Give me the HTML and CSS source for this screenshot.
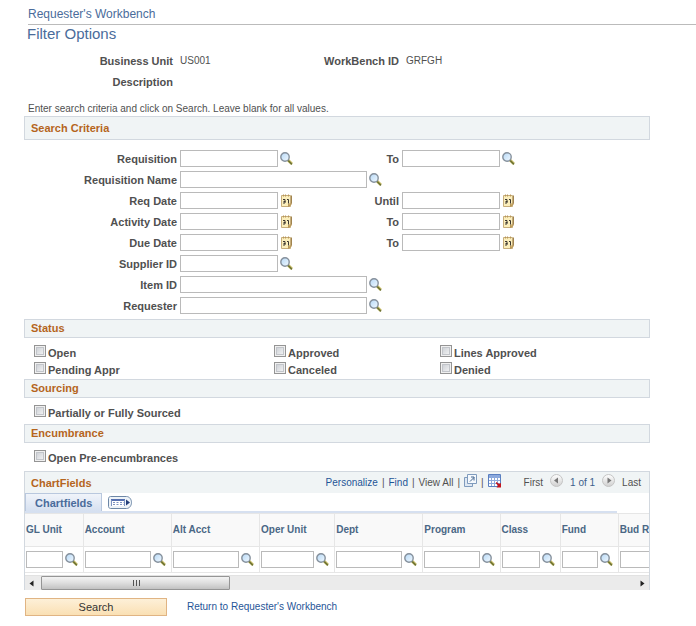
FILE: index.html
```html
<!DOCTYPE html>
<html lang="en">
<head>
    <meta charset="UTF-8">
    <meta name="viewport" content="width=device-width, initial-scale=1.0">
    <title>Requester's Workbench</title>
    <link rel="stylesheet" href="styles.css">
</head>
<body>
    <!-- Shared icons -->
    <svg class="sprite" aria-hidden="true">
        <defs>
            <linearGradient id="lens" x1="0" y1="0" x2="1" y2="1">
                <stop offset="0" stop-color="#b5d8f6"/>
                <stop offset="1" stop-color="#f2f9ff"/>
            </linearGradient>
            <linearGradient id="ball" x1="0" y1="0" x2="0" y2="1">
                <stop offset="0" stop-color="#fff"/>
                <stop offset="1" stop-color="#cfcfcf"/>
            </linearGradient>
            <symbol id="lookup" viewBox="0 0 13 13">
                <path d="M8 8l3.8 3.8" stroke="#d5c878" stroke-width="3"/>
                <path d="M8 8.4l4 4" stroke="#6f7432" stroke-width="1.6"/>
                <circle cx="5" cy="5" r="4.2" fill="url(#lens)" stroke="#85909c" stroke-width="1.4"/>
            </symbol>
            <symbol id="calendar" viewBox="0 0 13 13">
                <path d="M1.5 1.5h9v11h-9z" fill="#fbeebb" stroke="#c6ad7a"/>
                <path d="M11.5 1.5v8l-3 3" fill="none" stroke="#a08450"/>
                <path d="M8.5 12.5v-2.5h3z" fill="#e8cc7c" stroke="#b8975a"/>
                <path d="M3.5 .5v2M5.5 .5v2M8.500 .5v2" stroke="#b8975a"/>
                <path d="M3 5.500h2v3.500H3M3.500 7.500h2M7 5.500h1.500V9.500" fill="none" stroke="#3a3630"/>
            </symbol>
        </defs>
    </svg>

    <div class="breadcrumb">Requester's Workbench</div>

    <form class="page">
        <h1>Filter Options</h1>

        <dl class="info">
            <dt>Business Unit</dt><dd>US001</dd>
            <dt>WorkBench ID</dt><dd>GRFGH</dd>
            <dt>Description</dt><dd></dd>
        </dl>

        <p class="hint">Enter search criteria and click on Search. Leave blank for all values.</p>

        <h2 class="bar bar-tall">Search Criteria</h2>
        <div class="criteria">
            <div class="row">
                <label for="req">Requisition</label>
                <input type="text" id="req">
                <button type="button" class="icon" aria-label="Look up requisition"><svg><use href="#lookup"/></svg></button>
                <label class="to" for="req-to">To</label>
                <input type="text" id="req-to">
                <button type="button" class="icon" aria-label="Look up requisition to"><svg><use href="#lookup"/></svg></button>
            </div>
            <div class="row">
                <label for="req-name">Requisition Name</label>
                <input type="text" class="wide" id="req-name">
                <button type="button" class="icon" aria-label="Look up requisition name"><svg><use href="#lookup"/></svg></button>
            </div>
            <div class="row">
                <label for="req-date">Req Date</label>
                <input type="text" id="req-date">
                <button type="button" class="icon" aria-label="Choose req date"><svg><use href="#calendar"/></svg></button>
                <label class="to" for="req-until">Until</label>
                <input type="text" id="req-until">
                <button type="button" class="icon" aria-label="Choose req date until"><svg><use href="#calendar"/></svg></button>
            </div>
            <div class="row">
                <label for="act-date">Activity Date</label>
                <input type="text" id="act-date">
                <button type="button" class="icon" aria-label="Choose activity date"><svg><use href="#calendar"/></svg></button>
                <label class="to" for="act-to">To</label>
                <input type="text" id="act-to">
                <button type="button" class="icon" aria-label="Choose activity date to"><svg><use href="#calendar"/></svg></button>
            </div>
            <div class="row">
                <label for="due-date">Due Date</label>
                <input type="text" id="due-date">
                <button type="button" class="icon" aria-label="Choose due date"><svg><use href="#calendar"/></svg></button>
                <label class="to" for="due-to">To</label>
                <input type="text" id="due-to">
                <button type="button" class="icon" aria-label="Choose due date to"><svg><use href="#calendar"/></svg></button>
            </div>
            <div class="row">
                <label for="supplier">Supplier ID</label>
                <input type="text" id="supplier">
                <button type="button" class="icon" aria-label="Look up supplier"><svg><use href="#lookup"/></svg></button>
            </div>
            <div class="row">
                <label for="item">Item ID</label>
                <input type="text" class="wide" id="item">
                <button type="button" class="icon" aria-label="Look up item"><svg><use href="#lookup"/></svg></button>
            </div>
            <div class="row">
                <label for="requester">Requester</label>
                <input type="text" class="wide" id="requester">
                <button type="button" class="icon" aria-label="Look up requester"><svg><use href="#lookup"/></svg></button>
            </div>
        </div>

        <h2 class="bar">Status</h2>
        <div class="checks status">
            <label><input type="checkbox">Open</label>
            <label><input type="checkbox">Approved</label>
            <label><input type="checkbox">Lines Approved</label>
            <label><input type="checkbox">Pending Appr</label>
            <label><input type="checkbox">Canceled</label>
            <label><input type="checkbox">Denied</label>
        </div>

        <h2 class="bar">Sourcing</h2>
        <div class="checks">
            <label><input type="checkbox">Partially or Fully Sourced</label>
        </div>

        <h2 class="bar">Encumbrance</h2>
        <div class="checks">
            <label><input type="checkbox">Open Pre-encumbrances</label>
        </div>

        <div class="grid">
            <div class="grid-head">
                <h2>ChartFields</h2>
                <div class="tools">
                    <a href="#">Personalize</a><span>|</span>
                    <a href="#">Find</a><span>|</span>
                    <span>View All</span><span>|</span>
                    <button type="button" class="icon" aria-label="Zoom">
                        <svg viewBox="0 0 13 13">
                            <path d="M3 3.500H.5v9h8V10" fill="#dfe8f2" stroke="#7f9bbd"/>
                            <path d="M3.500 .5h9v9h-9z" fill="#f5f9fd" stroke="#7f9bbd"/>
                            <path d="M6 7.500l4-4M7 3h3v3.500" fill="none" stroke="#44668f"/>
                        </svg>
                    </button>
                    <span>|</span>
                    <button type="button" class="icon download" aria-label="Download">
                        <svg viewBox="0 0 14 14">
                            <path d="M.5.5h12v12H.5z" fill="#fff" stroke="#5a7fc0"/>
                            <path d="M1 1h11v3H1z" fill="#8aa8de"/>
                            <path d="M3.500 1v11M6.500 1v11M9.500 1v11M1 6.500h11M1 9.500h11" stroke="#8fabdb"/>
                            <path d="M8 8l2 1 1 1 2-1v4.500H8.500l1.500-2-2-2z" fill="#c4141c"/>
                        </svg>
                    </button>
                </div>
                <div class="pager">
                    <span>First</span>
                    <button type="button" class="icon" aria-label="Previous">
                        <svg viewBox="0 0 13 13"><circle cx="6.500" cy="6.500" r="6" fill="url(#ball)" stroke="#c4c4c4"/><path d="M8 3.500v6l-4-3z" fill="#777"/></svg>
                    </button>
                    <span class="count">1 of 1</span>
                    <button type="button" class="icon" aria-label="Next">
                        <svg viewBox="0 0 13 13"><circle cx="6.500" cy="6.500" r="6" fill="url(#ball)" stroke="#c4c4c4"/><path d="M5.500 3.500v6l4-3z" fill="#777"/></svg>
                    </button>
                    <span>Last</span>
                </div>
            </div>

            <div class="tabs">
                <button type="button" class="tab">Chartfields</button>
                <button type="button" class="icon show-all" aria-label="Show all columns">
                    <svg viewBox="0 0 24 13">
                        <path d="M2.500.5h16c3 0 5 3 5 6s-2 6-5 6h-16c-1 0-2-1-2-2v-8c0-1 1-2 2-2z" fill="#eef3f8" stroke="#6d87a6"/>
                        <path d="M3 3h14v7H3z" fill="#fff"/>
                        <path d="M3 3h14v2H3z" fill="#5670b0"/>
                        <path d="M3.500 4v6M16.500 4v6" stroke="#7d93c0"/>
                        <path d="M5 6.500h11M5 8.500h11" stroke="#7d93c0" stroke-dasharray="2 1.500"/>
                        <path d="M18 3.500l4 3-4 3z" fill="#24407c"/>
                    </svg>
                </button>
            </div>

            <div class="scroll">
                <table>
                    <colgroup>
                        <col class="c-unit"><col class="c-acct"><col class="c-acct"><col class="c-oper"><col class="c-acct"><col class="c-prog"><col class="c-class"><col class="c-unit"><col class="c-acct">
                    </colgroup>
                    <thead>
                        <tr>
                            <th id="h1">GL Unit</th>
                            <th id="h2">Account</th>
                            <th id="h3">Alt Acct</th>
                            <th id="h4">Oper Unit</th>
                            <th id="h5">Dept</th>
                            <th id="h6">Program</th>
                            <th id="h7">Class</th>
                            <th id="h8">Fund</th>
                            <th id="h9">Bud Ref</th>
                        </tr>
                    </thead>
                    <tbody>
                        <tr>
                            <td><div class="cell"><input type="text" aria-labelledby="h1"><button type="button" class="icon" aria-label="Look up GL unit"><svg><use href="#lookup"/></svg></button></div></td>
                            <td><div class="cell"><input type="text" aria-labelledby="h2"><button type="button" class="icon" aria-label="Look up account"><svg><use href="#lookup"/></svg></button></div></td>
                            <td><div class="cell"><input type="text" aria-labelledby="h3"><button type="button" class="icon" aria-label="Look up alt acct"><svg><use href="#lookup"/></svg></button></div></td>
                            <td><div class="cell"><input type="text" aria-labelledby="h4"><button type="button" class="icon" aria-label="Look up oper unit"><svg><use href="#lookup"/></svg></button></div></td>
                            <td><div class="cell"><input type="text" aria-labelledby="h5"><button type="button" class="icon" aria-label="Look up dept"><svg><use href="#lookup"/></svg></button></div></td>
                            <td><div class="cell"><input type="text" aria-labelledby="h6"><button type="button" class="icon" aria-label="Look up program"><svg><use href="#lookup"/></svg></button></div></td>
                            <td><div class="cell"><input type="text" aria-labelledby="h7"><button type="button" class="icon" aria-label="Look up class"><svg><use href="#lookup"/></svg></button></div></td>
                            <td><div class="cell"><input type="text" aria-labelledby="h8"><button type="button" class="icon" aria-label="Look up fund"><svg><use href="#lookup"/></svg></button></div></td>
                            <td><div class="cell"><input type="text" aria-labelledby="h9"><button type="button" class="icon" aria-label="Look up bud ref"><svg><use href="#lookup"/></svg></button></div></td>
                        </tr>
                    </tbody>
                </table>
            </div>

            <div class="scrollbar">
                <button type="button" class="icon" aria-label="Scroll left"><svg viewBox="0 0 13 13"><path d="M8.500 3.500v6L4.500 6.500z" fill="#222"/></svg></button>
                <div class="track">
                    <div class="thumb"><svg viewBox="0 0 8 6"><path d="M1.500 0v6M4.500 0v6M7.500 0v6" stroke="#555"/></svg></div>
                </div>
                <button type="button" class="icon" aria-label="Scroll right"><svg viewBox="0 0 13 13"><path d="M4.500 3.500v6l4-3z" fill="#222"/></svg></button>
            </div>
        </div>

        <div class="actions">
            <button type="submit" class="search">Search</button>
            <a href="#">Return to Requester's Workbench</a>
        </div>
    </form>
</body>
</html>
```

FILE: styles.css
```css
* {
    box-sizing: border-box;
}
body {
    margin: 0;
    background: #fff;
    color: #505050;
    font-family: "Liberation Sans", Arial, sans-serif;
    font-size: 10px;
    line-height: 14px;
}
h1, h2, p, dl, dd {
    margin: 0;
}
a {
    color: #1f5597;
    text-decoration: none;
}
svg {
    display: block;
    width: 100%;
    height: 100%;
}
.sprite {
    position: absolute;
    width: 0;
    height: 0;
}
.breadcrumb {
    margin-left: 28px;
    padding: 7px 0 3px;
    border-bottom: 1px solid #bbb;
    color: #4a6c9b;
    font-size: 12px;
}
.page {
    margin: 0 46px 0 24px;
}
h1 {
    padding-left: 3px;
    color: #4a6c9b;
    font-size: 15px;
    font-weight: normal;
    line-height: 18px;
}

/* Header values */
.info {
    display: grid;
    grid-template-columns: 149px 134px 78px 1fr;
    gap: 7px;
    padding: 11px 0 13px;
}
.info dt {
    font-size: 11px;
    font-weight: bold;
    text-align: right;
    white-space: nowrap;
}
.hint {
    padding-left: 4px;
}

/* Section bars */
.bar {
    padding: 0 6px;
    border: 1px solid #d2d8df;
    background: #f0f4f5;
    line-height: 17px;
}
.bar-tall {
    line-height: 22px;
}
h2 {
    color: #b5651d;
    font-size: 11px;
}

/* Search fields */
.criteria {
    display: grid;
    gap: 4px;
    padding: 10px 0 5px;
}
.row {
    display: flex;
    align-items: center;
    gap: 2px;
}
.row label {
    width: 154px;
    padding-right: 1px;
    font-size: 11px;
    font-weight: bold;
    text-align: right;
}
.row .to {
    width: 105px;
}
input[type="text"] {
    width: 98px;
    height: 17px;
    padding: 0 2px;
    border: 1px solid #bababa;
    background: #fff;
    font: inherit;
}
input.wide {
    width: 187px;
}
button {
    font: inherit;
    cursor: pointer;
}
.icon {
    flex: none;
    width: 13px;
    height: 13px;
    padding: 0;
    border: 0;
    background: none;
}

/* Tick boxes */
.checks {
    padding: 7px 10px 4px;
}
.status {
    display: grid;
    grid-template-columns: 240px 166px 1fr;
    row-gap: 2px;
    padding-bottom: 2px;
}
.checks label {
    display: flex;
    align-items: flex-end;
    gap: 2px;
    font-size: 11px;
    font-weight: bold;
}
input[type="checkbox"] {
    appearance: none;
    width: 12px;
    height: 12px;
    margin: 0 0 3px;
    border: 1px solid #949494;
    background: linear-gradient(135deg, #c4c8ce, #fafafa);
    box-shadow: inset 0 0 0 1px #f0f0f0, inset 0 0 0 2px #c2c5ca;
}

/* ChartFields grid */
.grid {
    margin-top: 2px;
    border: 1px solid #d2d8df;
    border-bottom: 0;
}
.grid-head {
    display: flex;
    align-items: center;
    height: 21px;
    padding: 0 8px 0 6px;
    background: #f0f4f5;
}
.grid-head .icon {
    margin-bottom: 4px;
}
.tools, .pager {
    display: flex;
    align-items: center;
    white-space: nowrap;
}
.tools {
    gap: 4px;
    margin-left: auto;
}
.pager {
    gap: 7px;
    margin-left: 22px;
}
.count {
    color: #3d5f8c;
}
.download {
    width: 14px;
    height: 14px;
}
.tabs {
    display: flex;
    align-items: center;
    gap: 6px;
    height: 20px;
    margin-right: 32px;
    border-bottom: 2px solid #d6e0f0;
}
.tab {
    align-self: stretch;
    padding: 0 9px;
    border: 1px solid #b9c8de;
    border-bottom: 0;
    background: linear-gradient(#f0f4fa, #d6e0f0);
    color: #4a6c9b;
    font-size: 11px;
    font-weight: bold;
}
.show-all {
    width: 24px;
}
.scroll {
    overflow: hidden;
}
table {
    width: 682px;
    table-layout: fixed;
    border-collapse: collapse;
}
.c-unit {
    width: 58px;
}
.c-acct {
    width: 88px;
}
.c-oper {
    width: 75px;
}
.c-prog {
    width: 77px;
}
.c-class {
    width: 60px;
}
th, td {
    padding: 0 5px 0 1px;
    border: 1px solid #e6e6e6;
    border-left: 0;
}
th {
    height: 33px;
    background: #f9f9f9;
    color: #4a6785;
    text-align: left;
    white-space: nowrap;
}
td {
    height: 26px;
}
.cell {
    display: flex;
    align-items: center;
    gap: 2px;
}
.cell input[type="text"] {
    flex: 1;
    width: 0;
}
.scrollbar {
    display: flex;
    align-items: center;
    height: 15px;
    margin-top: 2px;
    border-top: 1px solid #e2e2e2;
    background: #ebebeb;
}
.track {
    flex: 1;
    padding: 0 3px;
}
.thumb {
    display: flex;
    align-items: center;
    justify-content: center;
    width: 32%;
    height: 14px;
    border: 1px solid #959595;
    border-radius: 1px;
    background: linear-gradient(#f3f3f3, #dedede 50%, #c2c2c2);
}
.thumb svg {
    width: 8px;
    height: 6px;
}

.actions {
    display: flex;
    align-items: center;
    gap: 20px;
    padding: 8px 1px;
}
.search {
    width: 142px;
    height: 18px;
    padding: 0;
    border: 1px solid #e0b483;
    background: linear-gradient(#fdf0d8, #fae0b4);
    color: #333;
    font-size: 11px;
}
```
